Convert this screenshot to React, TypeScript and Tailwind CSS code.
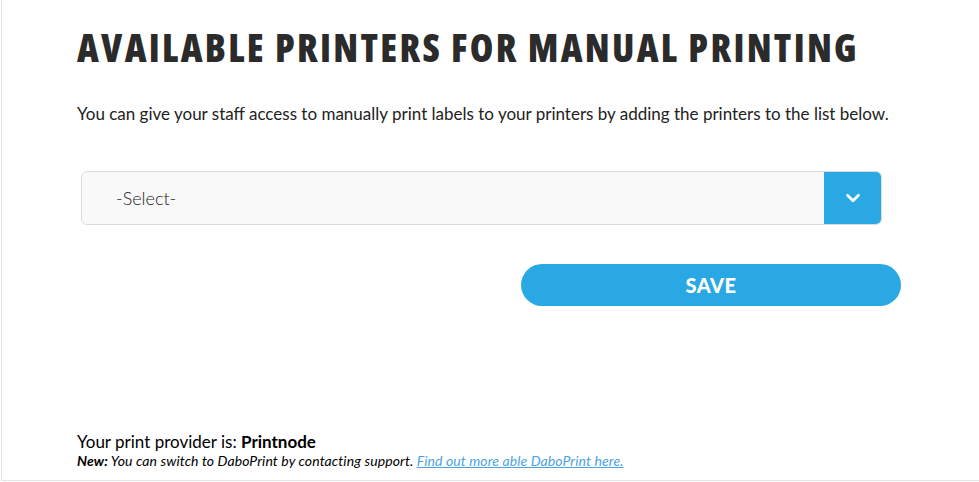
import { ChevronDown } from 'lucide-react';

export default function App() {
  return (
    <div className="w-[979px] h-[482px] bg-white pl-px font-['Lato',sans-serif] text-[#222]">
      <div className="flex h-[481px] flex-col border-b border-l border-[#e3e3e3] pl-[75px] pr-[78px]">
        {/* Heading */}
        <h1 className="mt-[24px] whitespace-nowrap font-['Open_Sans',sans-serif] text-[38px] font-extrabold uppercase leading-[46px] tracking-[2.3px] text-[#2b2b2b] [font-stretch:75%]">
          Available printers for manual printing
        </h1>

        <p className="mt-[32px] whitespace-nowrap text-[17px] leading-[24px] text-[#222]">
          You can give your staff access to manually print labels to your printers by adding the printers to the list below.
        </p>

        {/* Printer select */}
        <div className="ml-[4px] mr-[19px] mt-[45px] flex h-[54px] overflow-hidden rounded-[6px] border border-[#dcdcdc] bg-[#f9f9f9]">
          <div className="flex flex-1 items-center pl-[34px] text-[18px] font-light text-[#222]">-Select-</div>
          <div className="flex w-[57px] items-center justify-center bg-[#29a8e3]">
            <ChevronDown className="h-[22px] w-[22px] text-white" strokeWidth={3} />
          </div>
        </div>

        <div className="mt-[39px] flex justify-end">
          <button className="h-[42px] w-[380px] rounded-full bg-[#29a8e3] text-[20px] font-black tracking-[0.5px] text-white">
            SAVE
          </button>
        </div>

        {/* Provider info */}
        <div className="mt-auto mb-[10px]">
          <div className="text-[17px] leading-[20px] text-black">
            Your print provider is: <span className="font-bold">Printnode</span>
          </div>
          <div className="text-[14px] italic leading-[18px] tracking-[0.1px] text-black">
            <span className="font-bold">New:</span> You can switch to DaboPrint by contacting support.{' '}
            <a href="#" className="text-[#4aa3df] underline">Find out more able DaboPrint here.</a>
          </div>
        </div>
      </div>
    </div>
  );
}
